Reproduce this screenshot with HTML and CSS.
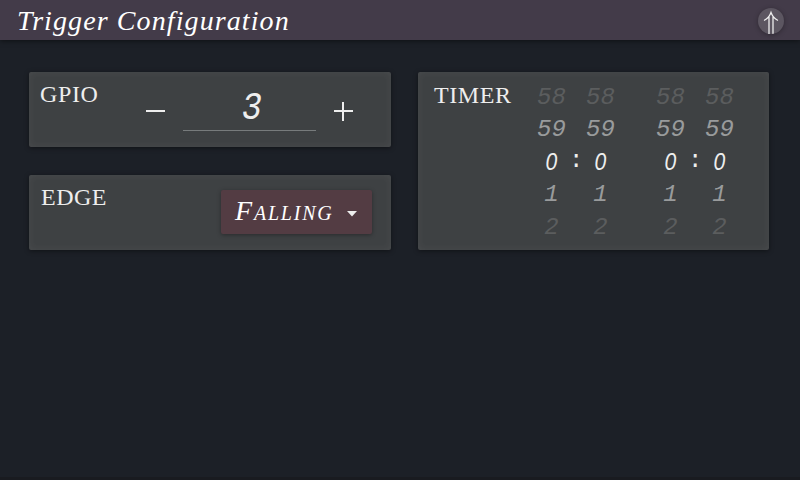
FILE: index.html
```html
<!DOCTYPE html>
<html lang="en">
<head>
<meta charset="utf-8">
<title>Trigger Configuration</title>
<link rel="stylesheet" href="styles.css">
</head>
<body>
<header class="bar">
  <h1 class="title">Trigger Configuration</h1>
  <button class="up" aria-label="Up"><svg width="26" height="26" viewBox="0 0 26 26"><path d="M11 26V8M15 26V8M6 12.500Q11 10 13 4.500Q15 10 20 12.500"/></svg></button>
</header>
<main class="content">
  <div class="column">
    <section class="card gpio">
      <h2 class="label">GPIO</h2>
      <button class="step minus" aria-label="Decrease"><svg width="19" height="19"><path d="M0 9H19"/></svg></button>
      <div class="value"><span class="digit">3</span></div>
      <button class="step" aria-label="Increase"><svg width="19" height="19"><path d="M0 9H19M9 0V19"/></svg></button>
    </section>
    <section class="card edge">
      <h2 class="label">EDGE</h2>
      <button class="select"><span class="choice">Falling</span><svg width="10" height="6"><path d="M0 0H10L5 5.500Z"/></svg></button>
    </section>
  </div>
  <section class="card timer">
    <h2 class="label">TIMER</h2>
    <div class="wheels">
      <div class="wheel"><span class="far">58</span><span class="near">59</span><span class="zero">0</span><span class="near">1</span><span class="far">2</span></div>
      <span class="colon">:</span>
      <div class="wheel"><span class="far">58</span><span class="near">59</span><span class="zero">0</span><span class="near">1</span><span class="far">2</span></div>
    </div>
    <div class="wheels">
      <div class="wheel"><span class="far">58</span><span class="near">59</span><span class="zero">0</span><span class="near">1</span><span class="far">2</span></div>
      <span class="colon">:</span>
      <div class="wheel"><span class="far">58</span><span class="near">59</span><span class="zero">0</span><span class="near">1</span><span class="far">2</span></div>
    </div>
  </section>
</main>
</body>
</html>
```
FILE: styles.css
```css
* { box-sizing: border-box; }
body {
  margin: 0;
  height: 480px;
  overflow: hidden;
  background: #1c2027;
  color: #eee;
  font-family: "Liberation Serif", serif;
  border-bottom: 3px solid #191b20;
}
h1, h2 { margin: 0; font-weight: 400; }
button { border: 0; padding: 0; background: none; color: inherit; font: inherit; }
svg { display: block; }
.bar {
  display: flex;
  justify-content: space-between;
  height: 40px;
  padding: 0 16px 0 17px;
  background: #433b49;
  box-shadow: 0 1px 5px rgba(0, 0, 0, .5);
}
.title {
  font-size: 28px;
  font-style: italic;
  line-height: 42px;
  letter-spacing: 1.1px;
  color: #fff;
}
.up {
  width: 26px;
  height: 26px;
  margin-top: 8px;
  border-radius: 50%;
  overflow: hidden;
  background: #5c5661;
  box-shadow: 0 1px 5px rgba(0, 0, 0, .3);
}
.up path { fill: none; stroke: #eee; stroke-width: 1.3; }
.content { display: flex; gap: 27px; padding: 32px 31px 0 29px; }
.column { display: flex; flex-direction: column; gap: 28px; width: 362px; }
.card {
  display: flex;
  border-radius: 2px;
  background: #3e4143;
  box-shadow: 0 1px 5px rgba(0, 0, 0, .45), inset 0 0 8px rgba(255, 255, 255, .06);
}
.label { font-size: 24px; line-height: 26px; }
.gpio { height: 75px; padding: 9px 38px 0 11px; }
.gpio .label { width: 106px; letter-spacing: .6px; }
.step { width: 19px; height: 19px; margin-top: 21px; }
.step path { stroke: #eee; stroke-width: 2; }
.value {
  width: 133px;
  height: 50px;
  margin: 0 18px;
  padding-left: 4px;
  border-bottom: 1px solid #777b7c;
  font: italic 39px/56px "Liberation Mono", monospace;
  text-align: center;
}
.digit { display: inline-block; transform: scaleX(.86); }
.edge { justify-content: space-between; height: 75px; padding: 9px 19px 0 12px; }
.edge .label { letter-spacing: .5px; }
.select {
  display: flex;
  align-items: center;
  justify-content: space-between;
  width: 151px;
  height: 44px;
  margin-top: 6px;
  padding: 0 15px 0 14px;
  border-radius: 2px;
  background: #533c43;
  box-shadow: 0 1px 4px rgba(0, 0, 0, .35);
  color: #fff;
}
.choice {
  font-size: 28px;
  font-style: italic;
  font-variant: small-caps;
  line-height: 40px;
  letter-spacing: 1.8px;
  margin-top: -2px;
}
.select svg { fill: #eee; margin-top: 4px; }
.timer { width: 351px; height: 178px; padding: 9px 0 0 16px; }
.timer .label { width: 93px; line-height: 29px; letter-spacing: .6px; }
.wheels {
  display: flex;
  width: 119px;
  padding-top: 1px;
  font: italic 24px/32.4px "Liberation Mono", monospace;
}
.wheel { display: flex; flex-direction: column; width: 49px; text-align: center; }
.wheels .wheel:last-child { margin-left: -7px; }
.near { color: #999b9c; }
.far { color: #5b5d5e; }
.zero { font-family: "Liberation Sans", sans-serif; transform: translateY(-1px) scaleX(.88); }
.colon { width: 14px; margin: 63px 0 0 -7px; font-style: normal; }
```
